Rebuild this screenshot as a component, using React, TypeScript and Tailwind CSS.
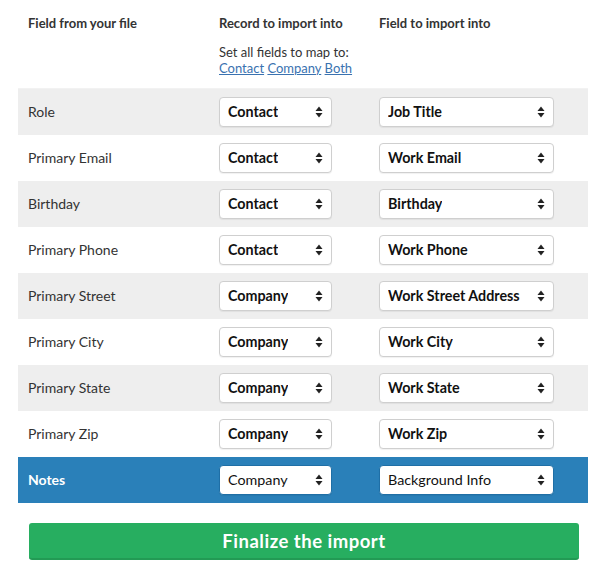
import React from 'react';

type Row = { field: string; record: string; target: string; active?: boolean };

const rows: Row[] = [
  { field: 'Role', record: 'Contact', target: 'Job Title' },
  { field: 'Primary Email', record: 'Contact', target: 'Work Email' },
  { field: 'Birthday', record: 'Contact', target: 'Birthday' },
  { field: 'Primary Phone', record: 'Contact', target: 'Work Phone' },
  { field: 'Primary Street', record: 'Company', target: 'Work Street Address' },
  { field: 'Primary City', record: 'Company', target: 'Work City' },
  { field: 'Primary State', record: 'Company', target: 'Work State' },
  { field: 'Primary Zip', record: 'Company', target: 'Work Zip' },
  { field: 'Notes', record: 'Company', target: 'Background Info', active: true },
];

const Arrows = () => (
  <svg width="8" height="12" viewBox="0 0 8 12" className="shrink-0">
    <path d="M4 0.5 L7.5 5 H0.5 Z" fill="#222" />
    <path d="M4 11.5 L7.5 7 H0.5 Z" fill="#222" />
  </svg>
);

const FakeSelect: React.FC<{ value: string; width: string; light?: boolean }> = ({ value, width, light }) => (
  <div
    className={`${width} h-[30px] flex items-center justify-between pl-[8px] pr-[8px] bg-white rounded-[4px] border ${
      light ? 'border-[#1f6fa6] font-normal' : 'border-[#cfcfcf] font-bold'
    } shadow-[0_1px_1px_rgba(0,0,0,0.06)] text-[14.3px] text-[#111] cursor-default`}
  >
    <span className="truncate">{value}</span>
    <Arrows />
  </div>
);

export default function App() {
  return (
    <div className="w-[601px] h-[578px] bg-white text-[#333] font-['Lato','Liberation_Sans',sans-serif]">
      <div className="ml-[18px] w-[570px]">
        {/* header */}
        <div className="h-[89px] flex border-b border-[#f2f2f2] text-[13px]">
          <div className="w-[201px] pl-[10px] pt-[14px] font-bold">Field from your file</div>
          <div className="w-[160px] pt-[14px]">
            <div className="font-bold">Record to import into</div>
            <div className="mt-[10px] leading-[16px]">Set all fields to map to:</div>
            <div className="leading-[16px] text-[#3a72b0]">
              <a className="underline">Contact</a> <a className="underline">Company</a>{' '}
              <a className="underline">Both</a>
            </div>
          </div>
          <div className="flex-1 pt-[14px] font-bold">Field to import into</div>
        </div>

        {/* rows */}
        {rows.map((r, i) => (
          <div
            key={r.field}
            className={`h-[46px] flex items-center text-[14px] ${
              r.active ? 'bg-[#2a80b9] text-white font-bold' : i % 2 === 0 ? 'bg-[#eeeeee]' : 'bg-white'
            }`}
          >
            <div className="w-[201px] pl-[10px] pb-[1px]">{r.field}</div>
            <div className="w-[160px]">
              <FakeSelect value={r.record} width="w-[113px]" light={r.active} />
            </div>
            <div className="flex-1">
              <FakeSelect value={r.target} width="w-[175px]" light={r.active} />
            </div>
          </div>
        ))}
      </div>

      <div className="pl-[29px] pt-[20px]">
        <button className="w-[550px] h-[37px] pt-[3px] rounded-[3px] bg-[#27ae60] border-b-[2px] border-[#229a54] text-white font-bold text-[18.5px] tracking-[0.5px]">
          Finalize the import
        </button>
      </div>
    </div>
  );
}
